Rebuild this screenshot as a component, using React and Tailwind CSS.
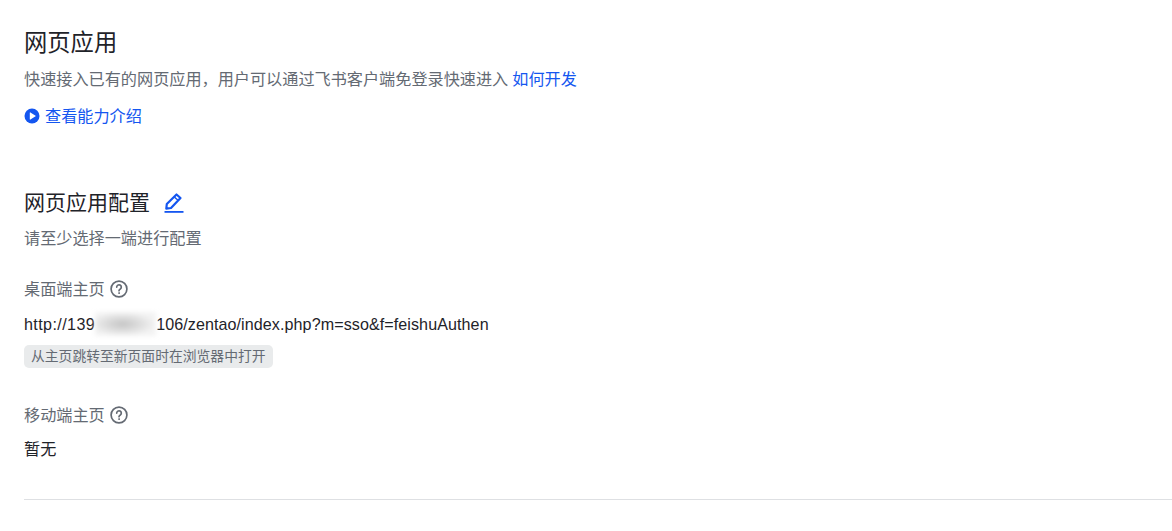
import React from 'react';

const cjk = "font-['Liberation_Sans','Noto_Sans_CJK_SC',sans-serif]";

const HelpIcon = () => (
  <svg width="18" height="18" viewBox="0 0 18 18" fill="none" stroke="#646a73" strokeWidth="1.7" strokeLinecap="round">
    <circle cx="9" cy="9" r="7.9" />
    <path d="M6.700 7.100a2.300 2.300 0 1 1 3.600 1.900c-.8.5-1.300.9-1.300 1.700" />
    <circle cx="9" cy="13.100" r="0.5" fill="#646a73" strokeWidth="0.8" />
  </svg>
);

const PlayIcon = () => (
  <svg width="16" height="16" viewBox="0 0 16 16">
    <circle cx="8" cy="8" r="7.500" fill="#1456f0" />
    <path d="M5.800 4.700v6.600a.4.4 0 0 0 .6.300l5.200-3.300a.4.4 0 0 0 0-.6L6.400 4.400a.4.4 0 0 0-.6.300z" fill="#fff" />
  </svg>
);

const EditIcon = () => (
  <svg width="20" height="20" viewBox="0 0 20 20" fill="none" stroke="#1456f0" strokeWidth="2.200" strokeLinejoin="round">
    <path d="M12.500 1.500l4 3.500-9.500 10-4.700.7.500-4.700z" />
    <path d="M10.300 4l4 3.500" strokeWidth="1.500" />
    <path d="M0.500 18.900h19" strokeWidth="1.800" />
  </svg>
);

const FieldLabel = ({ children }) => (
  <div className="flex items-center gap-[5px] h-6 text-[16.15px] text-[#646a73]">
    <span>{children}</span>
    <HelpIcon />
  </div>
);

export default function App() {
  return (
    <div className={`${cjk} w-[1172px] h-[531px] overflow-hidden bg-white pl-6 pt-[27px]`}>
      <h1 className="text-[23.3px] leading-8 text-[#1f2329]">网页应用</h1>
      <p className="mt-[8px] text-[16.15px] leading-6 text-[#646a73]">
        快速接入已有的网页应用，用户可以通过飞书客户端免登录快速进入
        <span className="ml-[4px] text-[#1456f0]">如何开发</span>
      </p>
      <div className="mt-[13px] flex items-center gap-[5px] h-6 text-[16.15px] text-[#1456f0]">
        <PlayIcon />
        <span>查看能力介绍</span>
      </div>

      <div className="mt-[61px] flex items-center gap-[14px] h-[28px]">
        <h2 className="text-[21px] leading-7 text-[#1f2329]">网页应用配置</h2>
        <EditIcon />
      </div>
      <p className="mt-[9px] text-[16.15px] leading-6 text-[#646a73]">请至少选择一端进行配置</p>

      <div className="mt-[27px]">
        <FieldLabel>桌面端主页</FieldLabel>
      </div>
      <div className="mt-[11px] flex items-center h-6 text-[16.1px] tracking-[0.08px] text-[#1f2329]">
        <span className="tracking-[0.4px]">http://139</span>
        <span className="w-[61px] h-6 bg-[radial-gradient(ellipse_at_45%_50%,#c4c4c4,#f3f3f3_70%)] blur-[2px]" />
        <span>106/zentao/index.php?m=sso&amp;f=feishuAuthen</span>
      </div>
      <div className="mt-[9px] w-fit h-[23px] px-[7px] rounded-[5px] bg-[#e9ebec] text-[13.8px] leading-[23px] text-[#646a73]">
        从主页跳转至新页面时在浏览器中打开
      </div>

      <div className="mt-[35px]">
        <FieldLabel>移动端主页</FieldLabel>
      </div>
      <div className="mt-[10px] h-6 text-[16.15px] leading-6 text-[#1f2329]">暂无</div>

      <div className="mt-[38px] h-px bg-[#dee0e3]" />
    </div>
  );
}
